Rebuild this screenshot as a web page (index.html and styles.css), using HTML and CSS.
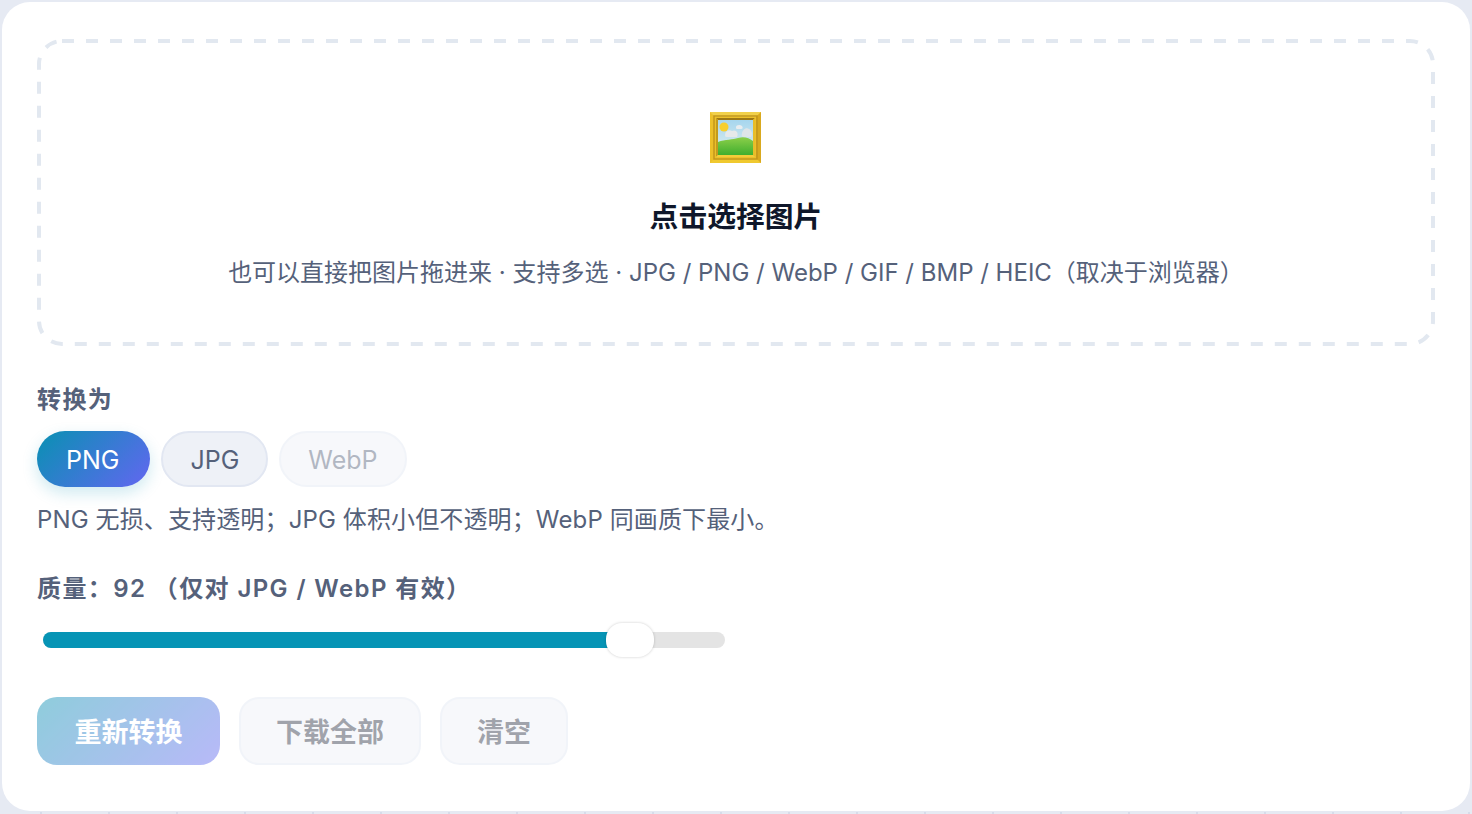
FILE: index.html
```html
<!DOCTYPE html>
<html lang="zh-CN">
<head>
  <meta charset="UTF-8">
  <meta name="viewport" content="width=device-width, initial-scale=1.0">
  <title>图片格式转换</title>
  <link rel="stylesheet" href="styles.css">
</head>
<body>
  <div class="card">
    <!-- Drop zone -->
    <div class="dropzone">
      <svg class="drop-border" width="1398" height="307" aria-hidden="true">
        <rect x="2" y="2" width="1394" height="303" rx="23" fill="none" stroke="#e2e8f0" stroke-width="4" stroke-dasharray="12 12"/>
      </svg>
      <svg class="drop-icon" viewBox="0 0 51 51" width="51" height="51" aria-hidden="true">
        <defs>
          <linearGradient id="sky" x1="0" y1="0" x2="0" y2="1">
            <stop offset="0" stop-color="#a6d6ee"/>
            <stop offset="1" stop-color="#e3f0ee"/>
          </linearGradient>
          <linearGradient id="grass" x1="0" y1="0" x2="0" y2="1">
            <stop offset="0" stop-color="#8ccf4a"/>
            <stop offset="1" stop-color="#3fae2e"/>
          </linearGradient>
        </defs>
        <!-- frame -->
        <rect width="51" height="51" fill="#ecc02a"/>
        <path d="M0 0H51L46 5H5Z" fill="#f1d04a"/>
        <path d="M0 51H51L46 46H5Z" fill="#f0c92f"/>
        <path d="M51 0L46 5V46L51 51Z" fill="#d9a91f"/>
        <rect x="4" y="4" width="43" height="43" fill="none" stroke="#c2961c" stroke-width="1.5"/>
        <path d="M6 6H45L43 8H8Z" fill="#9c7714"/>
        <path d="M6 6L8 8V43L6 45Z" fill="#c29a1e"/>
        <path d="M45 6L43 8V43L45 45Z" fill="#e7bc2a"/>
        <path d="M6 45H45L43 43H8Z" fill="#f2cd3a"/>
        <!-- picture -->
        <rect x="8" y="8" width="35" height="35" fill="url(#sky)"/>
        <path d="M8 30C15 27 23 28 28 26C34 24 39 26 43 29V43H8Z" fill="url(#grass)"/>
        <circle cx="14" cy="15" r="4.5" fill="#f7cf2f"/>
        <path d="M15 23C15 19 19 17 22 19C26 17 29 21 27 25H17C15 25 15 24 15 23Z" fill="#e6e9ea"/>
        <path d="M32 22C32 18 36 15 39 17C42 18 43 23 41 25H34C32 25 31 23 32 22Z" fill="#dfe5e8"/>
        <path d="M26 15C26 13 30 12 32 14C33 15 33 17 31 17H27C26 17 26 16 26 15Z" fill="#e9edef"/>
      </svg>
      <div class="drop-title">点击选择图片</div>
      <div class="drop-sub">也可以直接把图片拖进来 · 支持多选 · JPG / PNG / WebP / GIF / BMP / HEIC（取决于浏览器）</div>
    </div>

    <!-- Format -->
    <div class="label format-label">转换为</div>
    <div class="pills">
      <button class="pill active">PNG</button>
      <button class="pill">JPG</button>
      <button class="pill disabled">WebP</button>
    </div>
    <div class="hint">PNG 无损、支持透明；JPG 体积小但不透明；WebP 同画质下最小。</div>

    <!-- Quality -->
    <div class="label quality-label">质量：92 （仅对 JPG / WebP 有效）</div>
    <div class="slider">
      <div class="slider-fill"></div>
      <div class="slider-thumb"></div>
    </div>

    <!-- Actions -->
    <div class="actions">
      <button class="btn primary">重新转换</button>
      <button class="btn">下载全部</button>
      <button class="btn">清空</button>
    </div>
  </div>
</body>
</html>
```

FILE: styles.css
```css
* {
  box-sizing: border-box;
}
html, body {
  height: 100%;
}
body {
  margin: 0;
  padding: 2px 2px 3px 2px;
  background-color: #e6eaf3;
  background-image: radial-gradient(circle, #d6dcea 1px, transparent 1.5px);
  background-size: 68px 68px;
  background-position: 7px 31px;
  font-family: Inter, "Noto Sans CJK SC", sans-serif;
  overflow: hidden;
}
.card {
  height: 809px;
  padding: 37px 35px 0;
  background-color: #ffffff;
  border-radius: 28px;
}
.dropzone {
  position: relative;
  height: 307px;
  padding-top: 73px;
  text-align: center;
}
.drop-border {
  position: absolute;
  left: 0;
  top: 0;
}
.drop-icon {
  display: block;
  margin: 0 auto;
  transform: translateX(-1px);
}
.drop-title {
  margin-top: 30px;
  font-size: 28.8px;
  line-height: 48px;
  font-weight: 700;
  color: #0f172a;
}
.drop-sub {
  margin-top: 8px;
  font-size: 24px;
  line-height: 48px;
  color: #55617a;
}
.label {
  font-size: 24px;
  line-height: 36px;
  font-weight: 600;
  letter-spacing: 1.4px;
  color: #55617a;
}
.format-label {
  margin-top: 36px;
}
.pills {
  display: flex;
  gap: 11px;
  margin-top: 13px;
}
.pill {
  height: 56px;
  padding: 2px 27px 0;
  border: 2px solid #e2e7f2;
  border-radius: 28px;
  background-color: #eef1f7;
  font-family: inherit;
  font-size: 25px;
  color: #55617a;
}
.pill.active {
  padding: 2px 31px 0 29px;
  border: none;
  background: linear-gradient(135deg, #0891b2, #6366f1);
  color: #ffffff;
  box-shadow: 0 6px 16px rgba(8, 145, 178, 0.2);
}
.pill.disabled {
  opacity: 0.45;
}
.hint {
  margin-top: 9px;
  font-size: 24px;
  line-height: 48px;
  letter-spacing: 0.13px;
  color: #55617a;
}
.quality-label {
  margin-top: 27px;
}
.slider {
  position: relative;
  width: 682px;
  height: 16px;
  margin: 25px 0 0 6px;
  border-radius: 8px;
  background-color: #e4e4e4;
}
.slider-fill {
  width: 570px;
  height: 16px;
  border-radius: 8px 0 0 8px;
  background-color: #0694b5;
}
.slider-thumb {
  position: absolute;
  left: 563px;
  top: -9px;
  width: 48px;
  height: 34px;
  border-radius: 16px;
  background-color: #ffffff;
  box-shadow: 0 0 3px rgba(0, 0, 0, 0.2);
}
.actions {
  display: flex;
  gap: 19px;
  margin-top: 49px;
}
.btn {
  height: 68px;
  padding: 0 35px 2px;
  border: 2px solid #e2e7f2;
  border-radius: 20px;
  background-color: #eef1f7;
  font-family: inherit;
  font-size: 27px;
  font-weight: 600;
  color: #2f3447;
  opacity: 0.45;
}
.btn.primary {
  border: none;
  padding: 0 37.5px 2px;
  background: linear-gradient(135deg, #0891b2, #6366f1);
  color: #ffffff;
}
```
